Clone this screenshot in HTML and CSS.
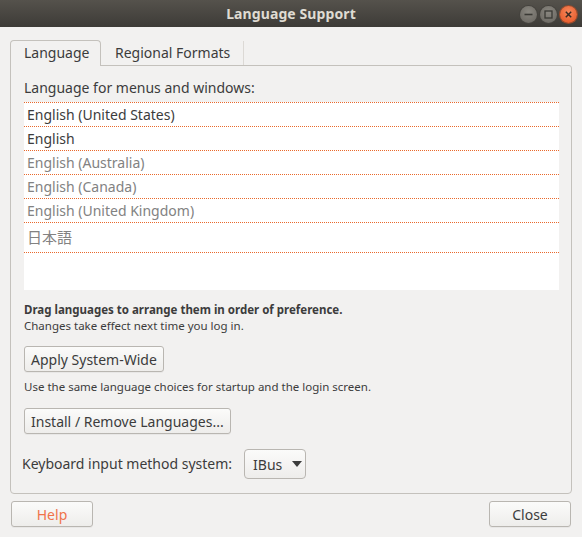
FILE: index.html
```html
<!DOCTYPE html>
<html>
<head>
<meta charset="utf-8">
<link rel="stylesheet" href="styles.css">
</head>
<body>
<div class="titlebar">
  <div></div>
  <div class="title">Language Support</div>
  <div class="wbtns">
    <span class="wbtn"><svg width="17" height="17" viewBox="0 0 17 17"><line x1="4.5" y1="8.5" x2="12.5" y2="8.5" stroke="#3a3935" stroke-width="1.6"/></svg></span>
    <span class="wbtn"><svg width="17" height="17" viewBox="0 0 17 17"><rect x="5" y="5" width="7" height="7" fill="none" stroke="#3a3935" stroke-width="1.3"/></svg></span>
    <span class="wbtn close"><svg width="17" height="17" viewBox="0 0 17 17"><path d="M5.8 5.8 L11.2 11.2 M11.2 5.8 L5.8 11.2" stroke="#3a2a22" stroke-width="1.5"/></svg></span>
  </div>
</div>
<div class="main">
  <div class="tabs">
    <div class="tab active">Language</div>
    <div class="tab">Regional Formats</div>
  </div>
  <div class="notebook">
    <div class="label">Language for menus and windows:</div>
    <div class="list">
      <div class="row">English (United States)</div>
      <div class="row">English</div>
      <div class="row dim">English (Australia)</div>
      <div class="row dim">English (Canada)</div>
      <div class="row dim">English (United Kingdom)</div>
      <div class="row dim ja">日本語</div>
    </div>
    <div class="note bold">Drag languages to arrange them in order of preference.</div>
    <div class="note">Changes take effect next time you log in.</div>
    <div class="btnrow first"><button class="btn">Apply System-Wide</button></div>
    <div class="note use">Use the same language choices for startup and the login screen.</div>
    <div class="btnrow second"><button class="btn">Install / Remove Languages...</button></div>
    <div class="kbd">
      <span class="label">Keyboard input method system:</span>
      <span class="combo">IBus <svg width="10" height="6" viewBox="0 0 10 6"><path d="M0 0 L10 0 L5 6 Z" fill="#3c3c3c"/></svg></span>
    </div>
  </div>
  <div class="footer">
    <button class="btn fbtn help">Help</button>
    <button class="btn fbtn">Close</button>
  </div>
</div>
</body>
</html>
```
FILE: styles.css
```css
* { box-sizing: border-box; }
html, body { margin: 0; height: 100%; }
body {
  background: #f2f1f0;
  font-family: "Noto Sans", "Noto Sans CJK JP", sans-serif;
  color: #3c3c3c;
  font-size: 14px;
  overflow: hidden;
}
.titlebar {
  height: 27px;
  background: linear-gradient(#55524c, #3d3b37);
  display: grid;
  grid-template-columns: 1fr auto 1fr;
  align-items: center;
}
.title {
  color: #dfdbd2;
  font-weight: bold;
  font-size: 14px;
  letter-spacing: 0.1px;
}
.wbtns {
  display: flex;
  justify-content: flex-end;
  gap: 3px;
  padding-right: 5px;
  padding-top: 1px;
}
.wbtn {
  width: 17px;
  height: 17px;
  border-radius: 50%;
  background: radial-gradient(circle at 50% 35%, #8a8780, #66635d);
  box-shadow: 0 0 0 1px #45433e;
  display: flex;
}
.wbtn.close {
  background: radial-gradient(circle at 50% 35%, #f7885c, #e4501f);
  box-shadow: 0 0 0 1px #9a4a2a;
}
.main {
  padding: 13px 10px 0 10px;
}
.tabs {
  display: flex;
  height: 25px;
}
.tab {
  padding: 0 13px 0 14px;
  line-height: 24px;
  font-size: 14px;
  color: #3c3c3c;
  border-right: 1px solid #dcd9d5;
  margin-top: 1px;
}
.tab.active {
  border: 1px solid #c4c1bc;
  border-bottom: none;
  border-radius: 4px 4px 0 0;
  background: #f2f1f0;
  margin-top: 0;
  height: 26px;
  position: relative;
  z-index: 1;
  width: 91px;
  padding: 0 0 0 13px;
}
.notebook {
  border: 1px solid #c4c1bc;
  border-radius: 0 3px 4px 4px;
  height: 429px;
  padding: 12px 12px 0 13px;
}
.label {
  font-size: 14px;
  line-height: 20px;
}
.list {
  margin-top: 4px;
  background: #fff;
  height: 188px;
}
.row {
  height: 24px;
  border-top: 1px dotted #e9692c;
  padding-left: 3px;
  line-height: 23px;
  font-size: 14px;
  color: #3c3c3c;
}
.row.dim { color: #828282; }
.row.ja {
  height: 31px;
  border-bottom: 1px dotted #e9692c;
  line-height: 29px;
  font-size: 15px;
}
.note {
  font-size: 11.5px;
  line-height: 16px;
}
.note.bold {
  font-weight: bold;
  margin-top: 12px;
}
.note.use { margin-top: 7px; }
.btnrow.first { margin-top: 12px; }
.btnrow.second { margin-top: 13px; }
.btn {
  font-family: inherit;
  font-size: 14px;
  color: #3c3c3c;
  height: 26px;
  padding: 0 6px;
  border: 1px solid #b9b6b1;
  border-radius: 3px;
  background: linear-gradient(#fbfbfa, #eeedeb);
  box-shadow: 0 1px 0 rgba(0,0,0,0.04);
}
.kbd {
  margin-top: 15px;
  display: flex;
  align-items: center;
  gap: 12px;
  margin-left: -2px;
}
.combo {
  height: 30px;
  width: 62px;
  border: 1px solid #b9b6b1;
  border-radius: 4px;
  background: linear-gradient(#fbfbfa, #eeedeb);
  display: flex;
  align-items: center;
  padding-left: 8px;
  gap: 10px;
  font-size: 14px;
}
.footer {
  display: flex;
  justify-content: space-between;
  margin-top: 7px;
  padding: 0 1px 0 1px;
}
.fbtn {
  width: 82px;
  height: 26px;
}
.help { color: #f0734a; }
```
